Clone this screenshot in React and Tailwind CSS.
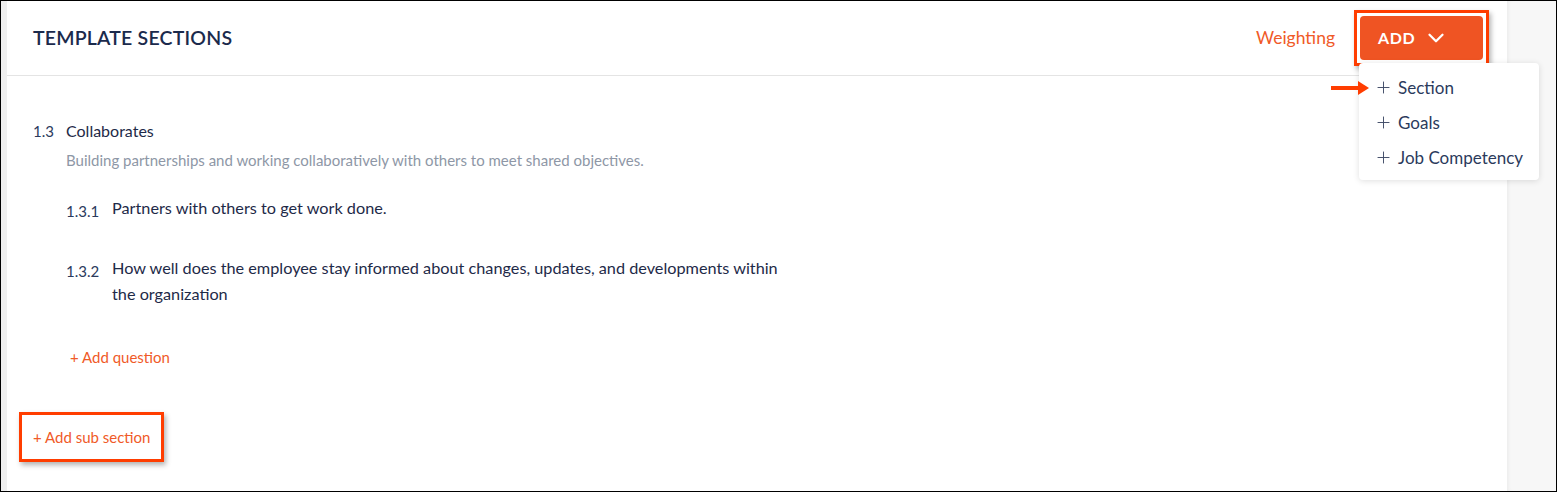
import { Plus, ChevronDown } from 'lucide-react';

const font = { fontFamily: 'Lato, "Open Sans", sans-serif' };

function MenuItem({ label }) {
  return (
    <div className="flex h-[35px] items-center gap-[5px] pl-[15px] text-[17px] text-[#2b3a5c]">
      <Plus size={19} strokeWidth={1.2} className="text-[#3f4b66]" />
      <span>{label}</span>
    </div>
  );
}

function Question({ num, children }) {
  return (
    <div className="flex items-start">
      <span className="w-[46px] shrink-0 pt-[5px] text-[15px] text-[#2b3a5c]">{num}</span>
      <p className="w-[680px] text-[16.25px] leading-[26px] text-[#1e2a48]">{children}</p>
    </div>
  );
}

export default function App() {
  return (
    <div
      className="box-border flex h-[492px] w-[1557px] border border-black bg-white"
      style={font}
    >
      <div className="w-[6px] shrink-0 bg-[#efefef]" />

      <div className="flex flex-1 flex-col bg-white">
        {/* Header */}
        <div className="flex h-[75px] shrink-0 items-center justify-between border-b border-[#e4e4e4] pl-[26px] pr-[24px]">
          <h2 className="text-[19.5px] font-semibold tracking-[0.2px] text-[#1b2a4c]">
            TEMPLATE SECTIONS
          </h2>
          <div className="flex items-center gap-[25px]">
            <span className="text-[17.5px] text-[#f05a28]">Weighting</span>
            <div className="relative">
              <div className="pointer-events-none absolute -inset-[6px] border-[3px] border-[#ff3d00] shadow-[2px_3px_5px_rgba(0,0,0,0.3)]" />
              <button className="flex h-[44px] w-[123px] items-center gap-[8px] rounded-[4px] bg-[#ef5423] pl-[18px] text-[16px] font-bold tracking-[0.6px] text-white">
                ADD
                <ChevronDown size={26} strokeWidth={2.1} />
              </button>

              {/* Dropdown */}
              <div className="absolute left-[-1px] top-[47px] z-10 h-[117px] w-[180px] rounded-[4px] bg-white pt-[7px] shadow-[0_1px_6px_rgba(0,0,0,0.13)]">
                <svg
                  className="absolute left-[-28px] top-[18px]"
                  width="38"
                  height="14"
                  viewBox="0 0 38 14"
                >
                  <rect x="0" y="5" width="29" height="4" fill="#ff3d00" />
                  <polygon points="27,0 38,7 27,14" fill="#ff3d00" />
                </svg>
                <MenuItem label="Section" />
                <MenuItem label="Goals" />
                <MenuItem label="Job Competency" />
              </div>
            </div>
          </div>
        </div>

        {/* Body */}
        <div className="flex flex-col pl-[26px] pt-[44px]">
          <div className="flex items-center">
            <span className="w-[33px] text-[15px] text-[#2b3a5c]">1.3</span>
            <span className="text-[16px] leading-[20px] text-[#1e2a48]">Collaborates</span>
          </div>
          <p className="ml-[33px] mt-[7px] text-[15px] leading-[20px] text-[#8e97a6]">
            Building partnerships and working collaboratively with others to meet shared objectives.
          </p>

          <div className="ml-[33px] mt-[25px] flex flex-col gap-[33px]">
            <Question num="1.3.1">Partners with others to get work done.</Question>
            <Question num="1.3.2">
              How well does the employee stay informed about changes, updates, and developments
              within the organization
            </Question>
          </div>

          <span className="ml-[37px] mt-[40px] text-[15px] leading-[20px] text-[#f05a28]">
            + Add question
          </span>

          <div className="relative mt-[60px] self-start">
            <div className="pointer-events-none absolute -bottom-[15px] -left-[14px] -right-[14px] -top-[15px] border-[3px] border-[#ff3d00] shadow-[2px_3px_5px_rgba(0,0,0,0.3)]" />
            <span className="block text-[15px] leading-[20px] text-[#f05a28]">+ Add sub section</span>
          </div>
        </div>
      </div>

      <div className="w-[49px] shrink-0 bg-[#f7f7f7] shadow-[inset_3px_0_4px_-2px_rgba(0,0,0,0.06)]" />
    </div>
  );
}
